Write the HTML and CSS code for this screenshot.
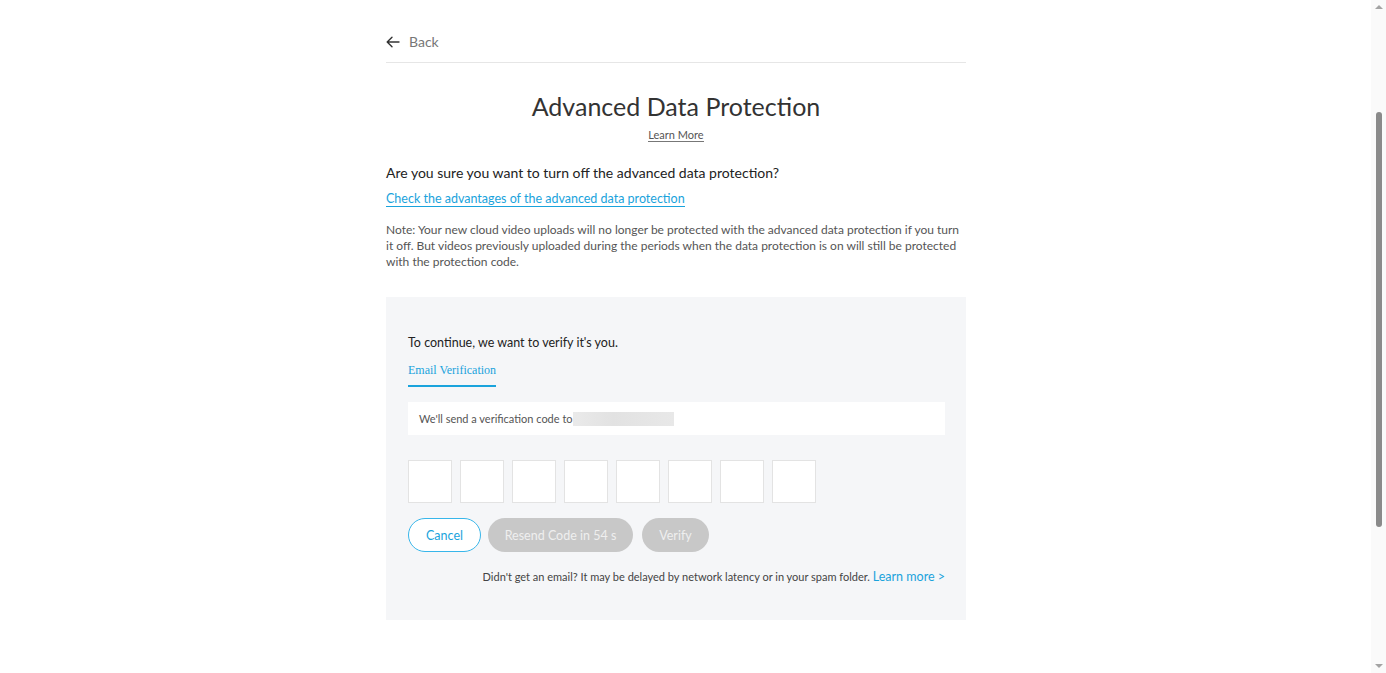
FILE: index.html
```html
<!DOCTYPE html>
<html>
<head>
<title>Advanced Data Protection</title>
<link rel="stylesheet" href="styles.css">
</head>
<body>

<div class="page">
	<div class="topbar">
		<a class="back" href="#">
			<svg width="14" height="12" viewBox="0 0 14 12"><path d="M13 6H1.5M6 1.2L1.2 6 6 10.8" fill="none" stroke="#333" stroke-width="1.4" stroke-linecap="round" stroke-linejoin="round"/></svg>
			<span>Back</span>
		</a>
	</div>

	<h1 class="title">Advanced Data Protection</h1>
	<div class="learn"><a href="#">Learn More</a></div>

	<p class="question">Are you sure you want to turn off the advanced data protection?</p>
	<a class="adv-link" href="#">Check the advantages of the advanced data protection</a>
	<p class="note">Note: Your new cloud video uploads will no longer be protected with the advanced data protection if you turn it off. But videos previously uploaded during the periods when the data protection is on will still be protected with the protection code.</p>

	<div class="verify-box">
		<p class="continue">To continue, we want to verify it's you.</p>
		<div class="tabs"><span class="tab">Email Verification</span></div>
		<div class="send-info">We'll send a verification code to<span class="blur"></span></div>

		<div class="code-row">
			<input class="code" type="text" maxlength="1">
			<input class="code" type="text" maxlength="1">
			<input class="code" type="text" maxlength="1">
			<input class="code" type="text" maxlength="1">
			<input class="code" type="text" maxlength="1">
			<input class="code" type="text" maxlength="1">
			<input class="code" type="text" maxlength="1">
			<input class="code" type="text" maxlength="1">
		</div>

		<div class="buttons">
			<button class="btn btn-cancel">Cancel</button>
			<button class="btn btn-off">Resend Code in 54 s</button>
			<button class="btn btn-off btn-verify">Verify</button>
		</div>

		<div class="hint">Didn't get an email? It may be delayed by network latency or in your spam folder. <a href="#">Learn more &gt;</a></div>
	</div>
</div>

<!-- window scrollbar as seen in the capture -->
<div class="scrollbar">
	<span class="arrow up"></span>
	<span class="thumb"></span>
	<span class="arrow down"></span>
</div>

</body>
</html>
```

FILE: styles.css
```css
body {
	margin: 0;
	padding-right: 34px;
	background: #fff;
	color: #333;
	font-family: Lato, "Noto Sans", sans-serif;
}
a {
	text-decoration: none;
}
p {
	margin: 0;
}

.page {
	width: 580px;
	margin: 0 auto;
	padding-bottom: 54px;
}

.topbar {
	height: 63px;
	border-bottom: 1px solid #e6e6e6;
	display: flex;
	align-items: center;
	padding-top: 21px;
	box-sizing: border-box;
}
.back {
	display: flex;
	align-items: center;
	gap: 9px;
	color: #777;
	font-size: 14px;
}

.title {
	margin: 29px 0 0;
	text-align: center;
	font-size: 25px;
	font-weight: 400;
	color: #333;
	line-height: 28px;
}
.learn {
	text-align: center;
	margin-top: 6px;
	line-height: 14px;
}
.learn a {
	font-size: 11px;
	color: #555;
	border-bottom: 1px solid #777;
}

.question {
	margin-top: 22px;
	font-size: 14px;
	color: #222;
	line-height: 18px;
}
.adv-link {
	display: inline-block;
	margin-top: 9px;
	font-size: 12.5px;
	color: #1aa3dc;
	border-bottom: 1px solid #1aa3dc;
	line-height: 15px;
}
.note {
	margin-top: 15px;
	font-size: 12px;
	line-height: 16px;
	color: #555;
}

.verify-box {
	margin-top: 27px;
	background: #f5f6f8;
	padding: 38px 21px 36px 22px;
}
.continue {
	font-size: 12.5px;
	color: #222;
	line-height: 16px;
}
.tabs {
	margin-top: 12px;
	display: flex;
}
.tab {
	font-family: "Liberation Serif", serif;
	font-size: 12px;
	color: #1aa3dc;
	padding-bottom: 7px;
	border-bottom: 2px solid #1aa3dc;
}
.send-info {
	margin-top: 15px;
	background: #fff;
	height: 33px;
	display: flex;
	align-items: center;
	padding-left: 11px;
	font-size: 11px;
	color: #555;
}
.blur {
	display: inline-block;
	width: 101px;
	height: 14px;
	background: linear-gradient(90deg, #eaeaea, #e2e2e2 40%, #e8e8e8);
}

.code-row {
	margin-top: 25px;
	display: flex;
	gap: 8px;
}
.code {
	width: 44px;
	height: 43px;
	box-sizing: border-box;
	border: 1px solid #e3e3e3;
	background: #fff;
	margin: 0;
	padding: 0;
	text-align: center;
	font-size: 18px;
	outline: none;
}

.buttons {
	margin-top: 15px;
	display: flex;
	gap: 7px;
}
.btn {
	height: 34px;
	border-radius: 17px;
	font-family: Lato, "Noto Sans", sans-serif;
	font-size: 12.5px;
	padding: 0;
	white-space: nowrap;
	border: 1px solid transparent;
	cursor: pointer;
}
.btn-cancel {
	width: 73px;
	background: #fff;
	color: #1aa3dc;
	border-color: #38b6ea;
}
.btn-off {
	width: 145px;
	background: #c8c8c8;
	color: #efefef;
}
.btn-verify {
	width: 67px;
	margin-left: 2px;
}

.hint {
	margin-top: 18px;
	text-align: right;
	font-size: 11px;
	color: #444;
	line-height: 14px;
}
.hint a {
	font-size: 12.5px;
	color: #1aa3dc;
}

.scrollbar {
	position: fixed;
	top: 0;
	right: 0;
	width: 15px;
	height: 100%;
	background: #fafafa;
}
.thumb {
	position: absolute;
	left: 5px;
	top: 112px;
	width: 6px;
	height: 415px;
	border-radius: 3px;
	background: #8a8a8a;
}
.arrow {
	position: absolute;
	left: 4px;
	width: 0;
	height: 0;
	border-left: 4px solid transparent;
	border-right: 4px solid transparent;
}
.arrow.up {
	top: 5px;
	border-bottom: 4px solid #a3a3a3;
}
.arrow.down {
	bottom: 5px;
	border-top: 4px solid #a3a3a3;
}
```
